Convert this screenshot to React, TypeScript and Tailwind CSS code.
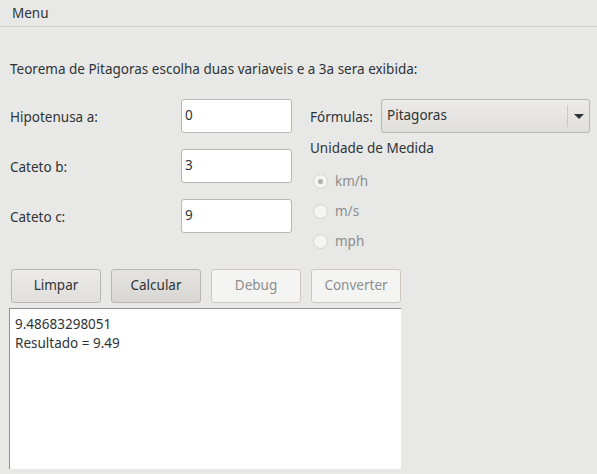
import React from "react";

const font = { fontFamily: '"Noto Sans", "Open Sans", sans-serif' };

function Radio({ label, checked }: { label: string; checked?: boolean }) {
  return (
    <div className="flex items-center h-[30px] pl-[3px]">
      <div className="w-[15px] h-[15px] rounded-full border border-[#d3d3d0] bg-[#f4f4f2] flex items-center justify-center">
        {checked && <div className="w-[5px] h-[5px] rounded-full bg-[#aeb0b0]" />}
      </div>
      <span className="ml-[7px] text-[#8b8e8f]">{label}</span>
    </div>
  );
}

function Field({ label, value }: { label: string; value: string }) {
  return (
    <div className="flex items-center h-[34px]">
      <span className="w-[171px] pt-[3px]">{label}</span>
      <div className="w-[111px] h-[34px] rounded-[3px] border border-[#b6b6b3] bg-white flex items-center pl-[3px] pb-[1px]">
        {value}
      </div>
    </div>
  );
}

export default function App() {
  return (
    <div className="w-[597px] h-[474px] bg-[#e8e8e7] text-[#2e3436] text-[13.5px] overflow-hidden" style={font}>
      <div className="h-[27px] border-b border-[#cdcdc9] flex items-center pl-[12px]">Menu</div>
      <div className="pl-[10px] pt-[32px] h-[53px]">Teorema de Pitagoras escolha duas variaveis e a 3a sera exibida:</div>
      <div className="flex pt-[19px]">
        <div className="flex flex-col gap-[16px] w-[310px] pl-[10px]">
          <Field label="Hipotenusa a:" value="0" />
          <Field label="Cateto b:" value="3" />
          <Field label="Cateto c:" value="9" />
        </div>
        <div className="flex flex-col">
          <div className="flex items-center h-[34px]">
            <span className="w-[71px] pt-[2px]">Fórmulas:</span>
            <div className="w-[209px] h-[34px] rounded-[3px] border border-[#b6b6b3] bg-gradient-to-b from-[#edebe9] to-[#e0dfdc] flex items-center pb-[1px]">
              <span className="pl-[5px] flex-1">Pitagoras</span>
              <div className="w-px h-[22px] bg-[#c8c8c5]" />
              <div className="w-[21px] flex justify-center pt-[1px]">
                <div className="w-0 h-0 border-l-[5px] border-r-[5px] border-t-[5px] border-l-transparent border-r-transparent border-t-[#2e3436]" />
              </div>
            </div>
          </div>
          <div className="h-[30px] flex items-center">Unidade de Medida</div>
          <div className="flex flex-col mt-[3px]">
            <Radio label="km/h" checked />
            <Radio label="m/s" />
            <Radio label="mph" />
          </div>
        </div>
      </div>
      <div className="flex gap-[10px] pl-[11px] mt-[13px]">
        <button className="w-[90px] h-[34px] rounded-[3px] border border-[#b6b6b3] bg-gradient-to-b from-[#edebe9] to-[#e0dfdc] pb-[1px]">Limpar</button>
        <button className="w-[90px] h-[34px] rounded-[3px] border border-[#b6b6b3] bg-gradient-to-b from-[#e4e3e0] to-[#d8d7d3] pb-[1px]">Calcular</button>
        <button className="w-[90px] h-[34px] rounded-[3px] border border-[#cdc7c2] bg-[#f4f4f2] text-[#8b8e8f] pb-[1px]">Debug</button>
        <button className="w-[90px] h-[34px] rounded-[3px] border border-[#cdc7c2] bg-[#f4f4f2] text-[#8b8e8f] pb-[1px]">Converter</button>
      </div>
      <div className="ml-[9px] mt-[5px] w-[392px] h-[161px] bg-white border-l border-t border-[#919190] pl-[5px] pt-[6px] leading-[19px]">
        <div>9.48683298051</div>
        <div>Resultado = 9.49</div>
      </div>
    </div>
  );
}
